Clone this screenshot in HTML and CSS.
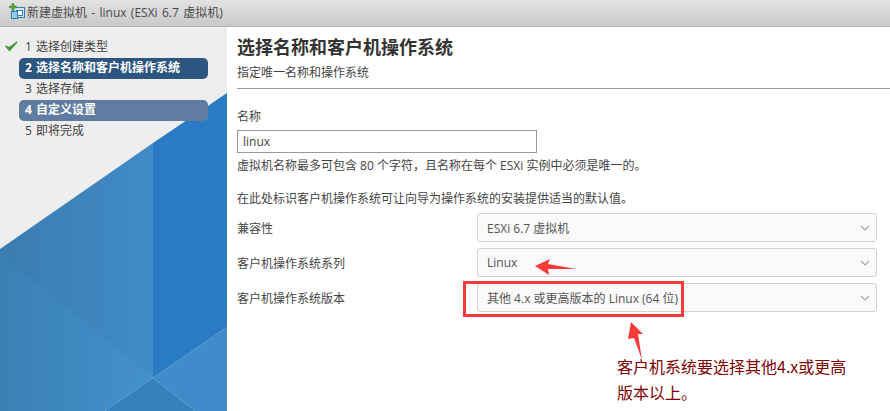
FILE: index.html
```html
<!DOCTYPE html>
<html lang="zh-CN">
<head>
    <meta charset="UTF-8">
    <title>新建虚拟机</title>
    <link rel="stylesheet" href="styles.css">
</head>
<body>
    <div class="titlebar">
        <svg class="vm-icon" width="20" height="18" viewBox="0 0 20 18">
            <rect x="6.500" y="4.500" width="11" height="10" fill="#cfe4f5" stroke="#2c7fb8"/>
            <rect x="9.500" y="7.500" width="6" height="5" fill="#fff" stroke="#2c7fb8"/>
            <rect x="4.500" y="8.500" width="6" height="7" fill="#9cc8e8" stroke="#2c7fb8"/>
            <path d="M5 0.500h2v2.500h2.500v2h-2.500v2.500h-2v-2.500h-2.500v-2h2.500z" fill="#5aa83a" stroke="#3c7f22" stroke-width="0.500"/>
        </svg>
        <span>新建虚拟机 - linux (ESXi 6.7 虚拟机)</span>
    </div>

    <div class="wizard">
        <div class="sidebar">
            <svg class="sidebar-art" width="227" height="385" viewBox="0 26 227 385">
                <defs>
                    <linearGradient id="midGrad" x1="0" x2="1" y1="0" y2="0">
                        <stop offset="0" stop-color="#3a7cb0"/>
                        <stop offset="1" stop-color="#418bc8"/>
                    </linearGradient>
                    <linearGradient id="lowGrad" x1="0" x2="1" y1="0" y2="0">
                        <stop offset="0" stop-color="#3a80b4"/>
                        <stop offset="1" stop-color="#4391ce"/>
                    </linearGradient>
                </defs>
                <polygon points="153,143 227,93 227,327 153,378" fill="#2b7ac4"/>
                <polygon points="0,249 153,143 153,378 0,262" fill="url(#midGrad)"/>
                <polygon points="0,254 153,378 105,411 0,411" fill="url(#lowGrad)"/>
                <polygon points="153,378 227,327 227,411 195,411" fill="#408cca"/>
                <polygon points="153,378 105,411 195,411" fill="#3581bd"/>
            </svg>
            <ul class="steps">
                <li class="step">
                    <svg class="check" width="13" height="11" viewBox="0 0 13 11"><path d="M1 5.500l3.500 4 7.500-8.500-7.500 5.500z" fill="#3c9a2e" stroke="#3c9a2e" stroke-width="1.200"/></svg>
                    1 选择创建类型
                </li>
                <li class="step active">2 选择名称和客户机操作系统</li>
                <li class="step">3 选择存储</li>
                <li class="step pending">4 自定义设置</li>
                <li class="step">5 即将完成</li>
            </ul>
        </div>

        <div class="content">
            <div class="page-head">
                <h1>选择名称和客户机操作系统</h1>
                <p class="subtitle">指定唯一名称和操作系统</p>
            </div>

            <label class="name-label" for="vm-name">名称</label>
            <input class="name-input" id="vm-name" type="text" value="linux">
            <p class="hint">虚拟机名称最多可包含 80 个字符，且名称在每个 ESXi 实例中必须是唯一的。</p>
            <p class="intro">在此处标识客户机操作系统可让向导为操作系统的安装提供适当的默认值。</p>

            <div class="form-row">
                <span class="row-label">兼容性</span>
                <div class="select">ESXi 6.7 虚拟机<svg class="chevron" width="10" height="6" viewBox="0 0 10 6"><path d="M1 1l4 4 4-4" fill="none" stroke="#a8a8a8" stroke-width="1.200"/></svg></div>
            </div>
            <div class="form-row">
                <span class="row-label">客户机操作系统系列</span>
                <div class="select">Linux<svg class="chevron" width="10" height="6" viewBox="0 0 10 6"><path d="M1 1l4 4 4-4" fill="none" stroke="#a8a8a8" stroke-width="1.200"/></svg></div>
            </div>
            <div class="form-row">
                <span class="row-label">客户机操作系统版本</span>
                <div class="select">其他 4.x 或更高版本的 Linux (64 位)<svg class="chevron" width="10" height="6" viewBox="0 0 10 6"><path d="M1 1l4 4 4-4" fill="none" stroke="#a8a8a8" stroke-width="1.200"/></svg></div>
            </div>
        </div>
    </div>

    <!-- screenshot annotations -->
    <div class="mark-box"></div>
    <svg class="mark-arrows" width="890" height="411" viewBox="0 0 890 411">
        <polygon points="535,266 550,259 548,264 576,269 548,269 549,275" fill="#f73a3a"/>
        <polygon points="631,322 643,334 638,334 642,360 634,338 628,339" fill="#f73a3a"/>
    </svg>
    <p class="note">客户机系统要选择其他4.x或更高<br>版本以上。</p>
</body>
</html>
```

FILE: styles.css
```css
html, body {
    margin: 0;
    height: 411px;
    overflow: hidden;
}
body {
    position: relative;
    background-color: #fff;
    color: #454545;
    font-family: "Open Sans", "Noto Sans CJK SC", sans-serif;
    font-size: 12px;
}
.titlebar {
    display: flex;
    align-items: center;
    box-sizing: border-box;
    height: 27px;
    padding: 0 0 3px 7px;
    background: linear-gradient(#e2e2e2, #c9c9cb);
    border-bottom: 1px solid #b5b5b7;
    color: #4a4a4a;
    word-spacing: 1.200px;
}
.vm-icon {
    flex: none;
}
.wizard {
    display: flex;
    height: 384px;
}
.sidebar {
    position: relative;
    flex: none;
    width: 227px;
    background-color: #eee;
    overflow: hidden;
}
.sidebar-art {
    position: absolute;
    top: -1px;
    left: 0;
}
.steps {
    position: relative;
    list-style: none;
    margin: 0;
    padding: 10px 0 0 19px;
    width: 189px;
}
.step {
    position: relative;
    box-sizing: border-box;
    height: 21px;
    line-height: 20px;
    padding-left: 6px;
    border-radius: 5px;
    color: #3f3f3f;
    word-spacing: 1px;
}
.step.active {
    background-color: #2c5580;
    color: #fff;
    font-weight: 700;
}
.step.pending {
    background-color: #607da1;
    color: #fff;
    font-weight: 700;
}
.check {
    position: absolute;
    left: -14px;
    top: 4px;
}
.content {
    flex: 1;
    padding-left: 10px;
}
.page-head {
    height: 62px;
    box-sizing: border-box;
    border-bottom: 1px solid #9a9a9a;
    padding-top: 8px;
}
h1 {
    margin: 0;
    font-size: 18px;
    line-height: 24px;
    font-weight: 700;
    color: #333;
}
.subtitle {
    margin: 5px 0 0;
    line-height: 18px;
}
.name-label {
    display: block;
    margin-top: 19px;
    line-height: 18px;
}
.name-input {
    display: block;
    box-sizing: border-box;
    width: 300px;
    height: 23px;
    margin-top: 4px;
    padding: 0 5px;
    border: 1px solid #999;
    background-color: #fff;
    color: #454545;
    font: inherit;
}
.hint {
    margin: 4px 0 0;
    line-height: 18px;
}
.intro {
    margin: 15px 0 0;
    line-height: 18px;
}
.form-row {
    display: flex;
    align-items: center;
    height: 29px;
    margin-bottom: 6px;
}
.intro + .form-row {
    margin-top: 5px;
}
.row-label {
    flex: none;
    width: 240px;
}
.select {
    display: flex;
    align-items: center;
    justify-content: space-between;
    box-sizing: border-box;
    width: 400px;
    height: 29px;
    padding: 0 6px 0 9px;
    background-color: #fafafa;
    border: 1px solid #d4d4d4;
    border-radius: 3px;
    color: #555;
}
.mark-box {
    position: absolute;
    left: 463px;
    top: 281px;
    box-sizing: border-box;
    width: 221px;
    height: 36px;
    border: 3px solid #f73a3a;
}
.mark-arrows {
    position: absolute;
    top: 0;
    left: 0;
}
.note {
    position: absolute;
    left: 617px;
    top: 353px;
    margin: 0;
    color: #800000;
    font-family: "Noto Sans CJK SC", sans-serif;
    font-size: 16px;
    line-height: 26px;
}
```
